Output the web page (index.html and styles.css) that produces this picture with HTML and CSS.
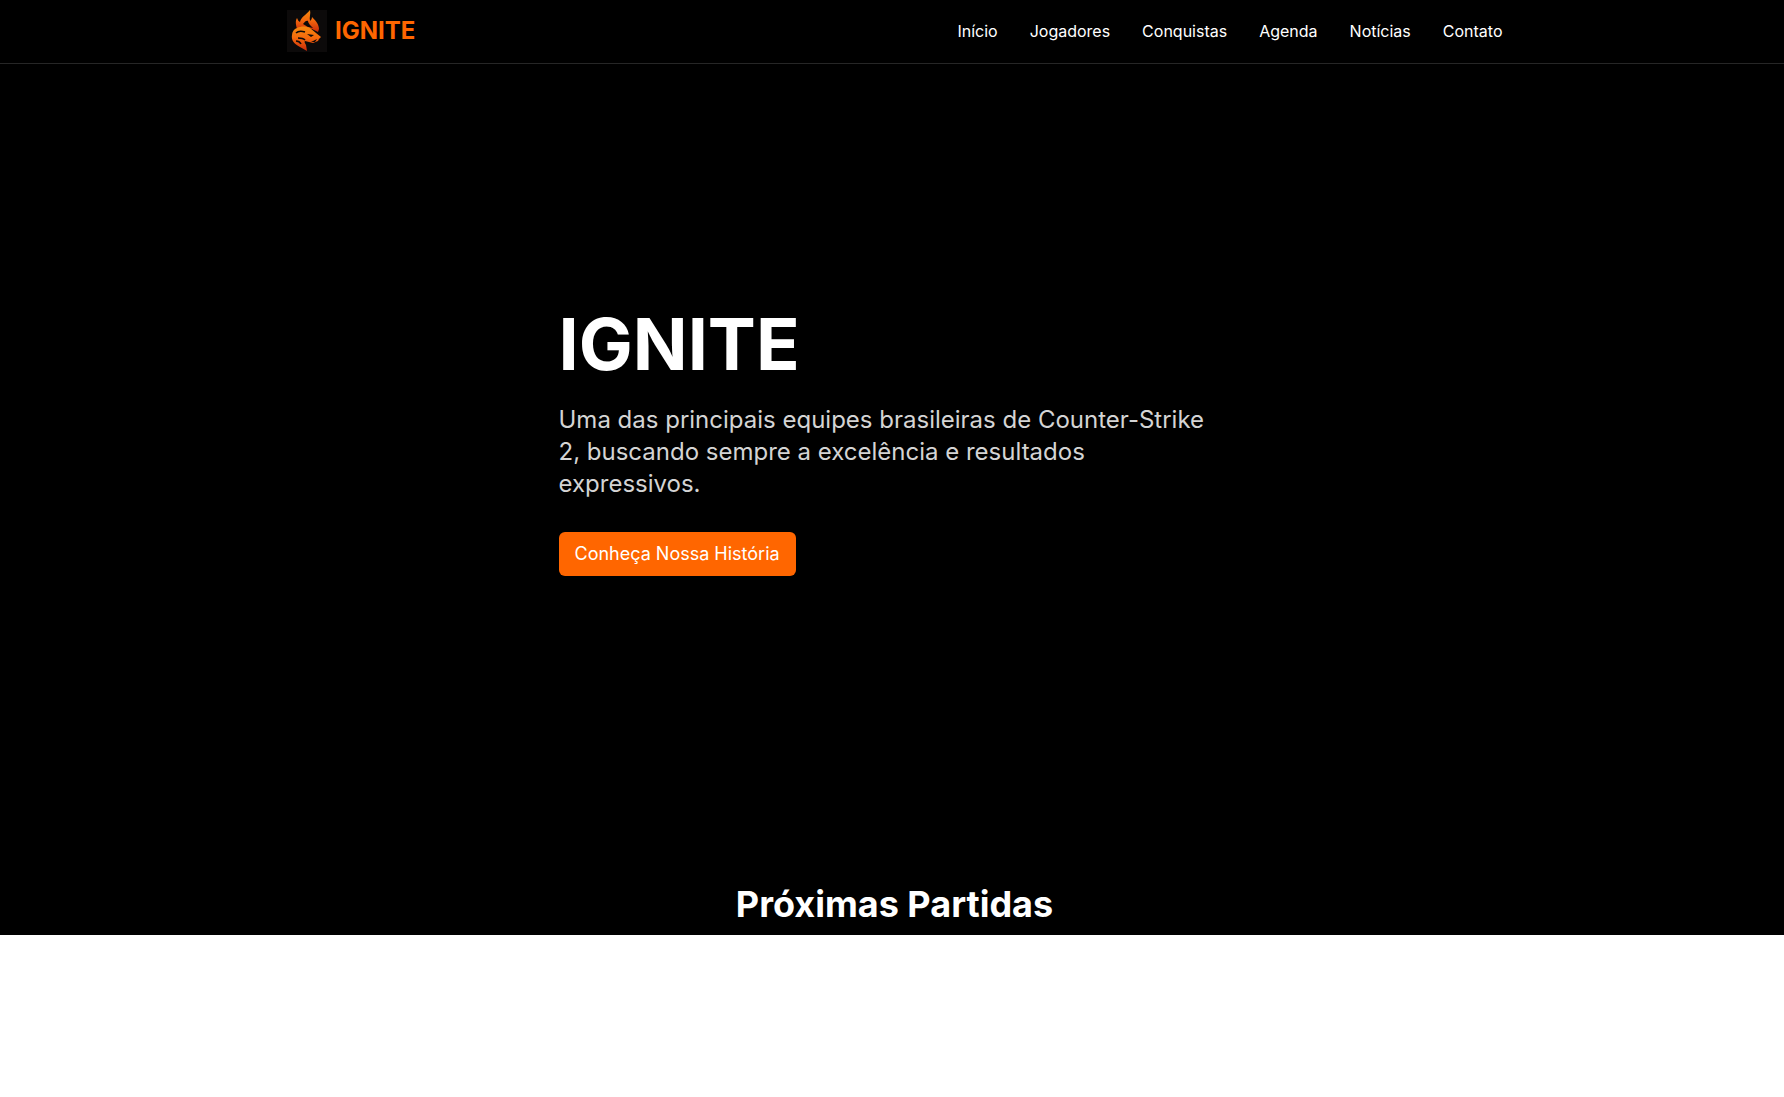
FILE: index.html
```html
<!DOCTYPE html>
<html lang="pt-BR">
<head>
    <meta charset="UTF-8">
    <meta name="viewport" content="width=device-width, initial-scale=1.0">
    <title>IGNITE</title>
    <link rel="stylesheet" href="styles.css">
</head>
<body>
    <div class="pagina">
        <header class="topo">
            <a href="#" class="marca">
                <span class="marca-icone">
                    <svg viewBox="0 0 40 42" width="40" height="42">
                        <defs>
                            <linearGradient id="fogo" x1="0" y1="0" x2="0" y2="1">
                                <stop offset="0" stop-color="#f58a10"/>
                                <stop offset="0.45" stop-color="#f56a0c"/>
                                <stop offset="1" stop-color="#c8280a"/>
                            </linearGradient>
                        </defs>
                        <!-- chamas -->
                        <path fill="url(#fogo)" d="M23 0c1 4 -1 7 0 11c1 -1 2 -2 2 -4c3 3 7 7 7 12l-1 3l-6 -3l-9 -2l-6 2c-1 -4 -2 -8 0 -11c1 2 1 3 3 4c1 -5 6 -7 10 -12z"/>
                        <path fill="#0c0a0a" d="M16 14c2 -3 4 -4 5 -3c0 2 2 4 5 7l-5 -1z"/>
                        <!-- cabeça -->
                        <path fill="url(#fogo)" d="M10 18c4 -2 9 -2 13 0l6 5l5 4l-2 2l-1 2l-5 2l-4 -1l-4 -1c-1 1 0 2 1 4l1 6l-7 -4c-6 -3 -9 -7 -8 -12c0 -3 2 -6 5 -7z"/>
                        <path fill="none" stroke="#0c0a0a" stroke-width="1.6" d="M9 23c2 -2 6 -2 9 -1M11 28c2 0 5 0 7 2M9 31c2 0 4 1 5 3"/>
                        <path fill="#0c0a0a" d="M20 24l7 1l-3 2zM24 32l6 -3l-2 3z"/>
                    </svg>
                </span>
                <span class="marca-nome">IGNITE</span>
            </a>
            <nav class="menu">
                <a href="#">Início</a>
                <a href="#">Jogadores</a>
                <a href="#">Conquistas</a>
                <a href="#">Agenda</a>
                <a href="#">Notícias</a>
                <a href="#">Contato</a>
            </nav>
        </header>

        <section class="destaque">
            <h1>IGNITE</h1>
            <p>Uma das principais equipes brasileiras de Counter-Strike 2, buscando sempre a excelência e resultados expressivos.</p>
            <a href="#" class="botao">Conheça Nossa História</a>
        </section>

        <h2 class="partidas">Próximas Partidas</h2>
    </div>
</body>
</html>
```

FILE: styles.css
```css
*{
    box-sizing: border-box;
    padding: 0;
    margin: 0;
}

body{
    font-family: Inter, "Noto Sans", sans-serif;
    background-color: #fff;
    color: #fff;
}

a{
    color: inherit;
    text-decoration: none;
}

.pagina{
    height: 935px;
    overflow: hidden;
    background-color: #000;
}

.topo{
    height: 64px;
    padding: 0 281.5px 2px 287px;
    display: flex;
    align-items: center;
    justify-content: space-between;
    border-bottom: 1px solid #262626;
}
.marca{
    display: flex;
    align-items: center;
    gap: 8px;
}
.marca-icone{
    width: 40px;
    height: 42px;
    display: block;
    background-color: #0c0a0a;
}
.marca-nome{
    font-size: 24px;
    font-weight: 700;
    color: #ff6600;
}
.menu{
    display: flex;
    gap: 32px;
    font-size: 16px;
    font-weight: 400;
}

.destaque{
    height: 820px;
    padding: 244px 0 0 558.5px;
}
.destaque h1{
    font-size: 72px;
    line-height: 72px;
    font-weight: 700;
    margin-bottom: 24px;
}
.destaque p{
    width: 672px;
    font-size: 24px;
    line-height: 32px;
    color: #d4d4d4;
    margin-bottom: 32px;
}
.botao{
    display: inline-block;
    padding: 9px 16px;
    font-size: 18px;
    line-height: 26px;
    font-weight: 400;
    background-color: #ff6600;
    border-radius: 6px;
}

.partidas{
    padding-left: 5px;
    font-size: 36px;
    line-height: 40px;
    font-weight: 700;
    text-align: center;
}
```
